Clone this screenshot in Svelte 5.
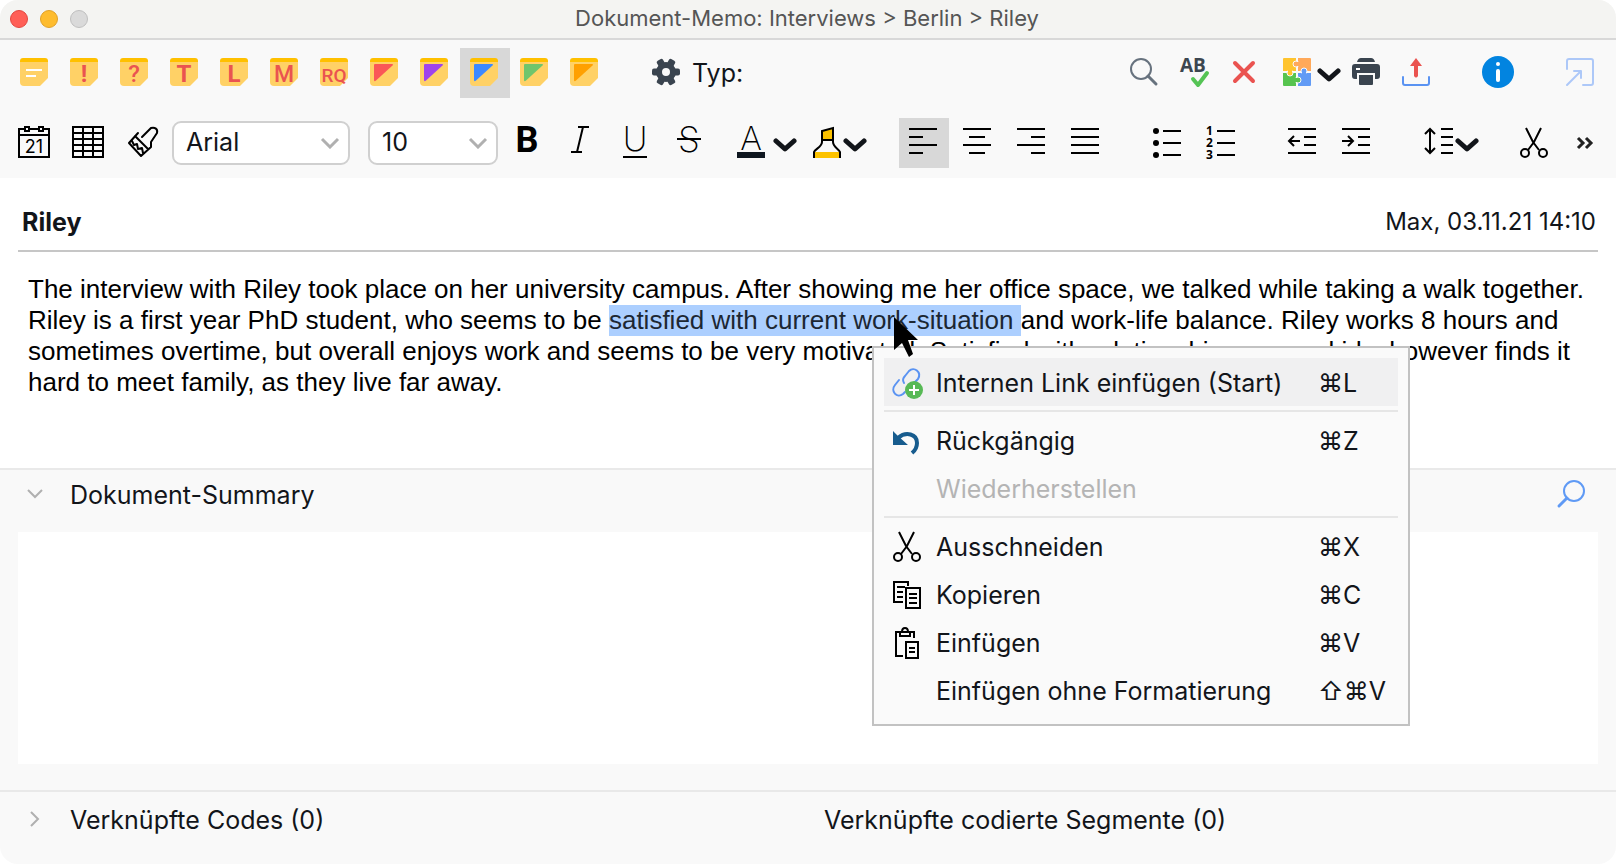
<script>
	const note = '<path d="M1 5h28v16l-8 8H5a4 4 0 0 1-4-4z" fill="#ffd166"/><path d="M1 5V4a3 3 0 0 1 3-3h22a3 3 0 0 1 3 3v1z" fill="#ffc000"/>';
	const letter = (t, size = 24, weight = 700) =>
		`${note}<text x="15" y="25" text-anchor="middle" font-family="Roboto, sans-serif" font-weight="${weight}" font-size="${size}" fill="#ea5350">${t}</text>`;
	const flag = (color) => `${note}<path d="M5 8q0-1 1-1h17q2 0 .5 1.500L7 23.500q-2 1.500-2-.5z" fill="${color}"/>`;
	const glyph = (t, size, weight, y = 24, family = 'Inter') =>
		`<text x="16" y="${y}" text-anchor="middle" font-family="${family}, sans-serif" font-weight="${weight}" font-size="${size}">${t}</text>`;
	const line = (d, w = 2, color = '#000') => `<path d="${d}" fill="none" stroke="${color}" stroke-width="${w}"/>`;
	const round = (d, w = 2, color = '#000') =>
		`<path d="${d}" fill="none" stroke="${color}" stroke-width="${w}" stroke-linecap="round" stroke-linejoin="round"/>`;

	const icons = {
		calendar:
			line('M1 2h30v28H1zM1 8h30') +
			'<path d="M7 0h4v4H7zM21 0h4v4h-4z" fill="#f9f9f9" stroke="#000" stroke-width="2"/>' +
			glyph('21', 18, 400, 26),
		table: line('M1 0h30v30H1zM11 0v30M21 0v30M1 6h30M1 12h30M1 18h30M1 24h30'),
		brush: round('M12 6L3 16l12 13 10-9V15l6-9c1-4-2-6-6-5l-7 7-2 2M9 9l13 13M6 14l2 4 3-1 1 5 4-1 1 5'),
		bold: glyph('B', 36, 700, 25, 'Roboto'),
		italic: line('M13 0h11M6 25h11M18 0l-6 25'),
		underline: glyph('U', 34, 200, 24) + line('M4 30h24'),
		strike: glyph('S', 35, 200, 25) + line('M4 12h24'),
		color: glyph('A', 33, 200, 23) + '<path d="M2 25h28v6H2z" fill="#0f1720"/>',
		marker:
			'<path d="M11 4l11-3v12H11zM3 25h26v6H3z" fill="#fcc200"/>' +
			line('M3 31v-6c1-3 8-5 8-10V4l11-3v14c0 5 6 7 7 10v6M11 13h11'),
		left: line('M1 2h28M1 10h14M1 18h28M1 26h14'),
		center: line('M1 2h28M7 10h16M1 18h28M7 26h16'),
		right: line('M1 2h28M15 10h14M1 18h28M15 26h14'),
		justify: line('M1 2h28M1 10h28M1 18h28M1 26h28'),
		bullets:
			'<circle cx="5" cy="4" r="3"/><circle cx="5" cy="16" r="3"/><circle cx="5" cy="28" r="3"/>' +
			line('M12 4h18M12 16h18M12 28h18'),
		numbers:
			'<g font-family="Open Sans, sans-serif" font-weight="700" font-size="12"><text x="1" y="8">1</text><text x="1" y="20">2</text><text x="1" y="32">3</text></g>' +
			line('M12 4h18M12 16h18M12 28h18'),
		outdent: line('M2 2h28M18 10h12M18 18h12M2 26h28M14 14H4M8 9l-5 5 5 5'),
		indent: line('M2 2h28M18 10h12M18 18h12M2 26h28M2 14h10M8 9l5 5-5 5'),
		spacing: line('M7 2v24M2 7l5-5 5 5M2 21l5 5 5-5M18 2h12M18 10h12M18 18h12M18 26h12'),
		scissors:
			line('M8 1l7 14 6 8M23 1l-7 14-6 8') +
			'<g fill="none" stroke="#000" stroke-width="2"><circle cx="7" cy="26" r="4"/><circle cx="25" cy="26" r="4"/></g>',
		more: line('M8 11l5 5-5 5M16 11l5 5-5 5', 3, '#222'),
		gear:
			'<g fill="#3a444f">' +
			[0, 60, 120, 180, 240, 300].map((a) => `<rect x="22" y="11.500" width="8" height="7" rx="2" transform="rotate(${a} 16 15)"/>`).join('') +
			'</g><circle cx="16" cy="15" r="7" fill="none" stroke="#3a444f" stroke-width="6"/>',
		search: '<circle cx="13" cy="12" r="10" fill="none" stroke="#67727e" stroke-width="2"/>' + round('M20 19l8 8', 3, '#67727e'),
		spell:
			'<text x="2" y="15" font-family="Open Sans, sans-serif" font-weight="700" font-size="19" fill="#3c4650">AB</text>' +
			round('M15 22l5 6 9-12', 4, '#55c455'),
		remove: round('M7 6l18 18M25 6L7 24', 4, '#ea5350'),
		puzzle:
			'<path d="M2 2q0-1 1-1h13v14H2z" fill="#ffc42e"/><path d="M16 1h13q1 0 1 1v13H16z" fill="#ffa95a"/>' +
			'<path d="M2 15h14v14H3q-1 0-1-1z" fill="#57c44f"/><path d="M16 15h14v13q0 1-1 1H16z" fill="#629bf5"/>' +
			line('M16 1v14M2 15h28M16 15v14', 2, '#f9f9f9') +
			'<g stroke="#f9f9f9" stroke-width="1"><circle cx="15" cy="7" r="3" fill="#ffa95a"/><circle cx="9" cy="16" r="3" fill="#ffc42e"/><circle cx="17" cy="23" r="3" fill="#57c44f"/><circle cx="23" cy="14" r="3" fill="#629bf5"/></g>' +
			'<path d="M15 5h4v4h-4z" fill="#ffa95a"/><path d="M7 12h4v4H7z" fill="#ffc42e"/><path d="M13 21h4v4h-4z" fill="#57c44f"/><path d="M21 14h4v4h-4z" fill="#629bf5"/>',
		print:
			'<path d="M7 5q1-4 4-4h10q3 0 4 4zM5 7h22q3 0 3 3v9q0 3-3 3H5q-3 0-3-3v-9q0-3 3-3z" fill="#3a444f"/>' +
			'<path d="M8 17h16v10q0 2-2 2H10q-2 0-2-2z" fill="#3a444f" stroke="#f9f9f9" stroke-width="2"/>' +
			line('M6 12h4', 2, '#fff'),
		upload: '<path d="M16 1l6 8h-4v10q-2 3-4 0V9h-4z" fill="#ea5350"/>' + round('M3 20v6q0 2 2 2h22q2 0 2-2v-6', 2, '#5a93f2'),
		info: '<circle cx="16" cy="15" r="16" fill="#0284e0"/><circle cx="16" cy="7" r="2" fill="#fff"/><rect x="14" y="12" width="4" height="13" rx="2" fill="#fff"/>',
		popout: round('M3 12V4q0-2 2-2h22q2 0 2 2v22q0 2-2 2h-8M3 28l14-14M10 14h7v7', 2, '#adc8f8'),
		link:
			round('M13 16c-2-3-1-5 1-7l4-5c5-5 13 1 9 8l-3 3M8 13l-4 5c-5 6 2 14 8 9l2-2', 2, '#5a93f2') +
			'<circle cx="23" cy="23" r="9" fill="#57b955"/>' +
			line('M23 18v10M18 23h10', 2, '#fff'),
		undo: '<path d="M2 6l5 5 10 9H2z" fill="#175c8e"/>' + line('M7 13c8-7 19-4 19 5q0 6-5 10', 4, '#175c8e'),
		copy: line('M12 23H3V3h14v4M15 9h14v20H15zM18 15h8M18 19h8M18 24h8M6 8h8M6 13h6M6 18h6'),
		paste: line('M12 29H5V5h4M19 5h4v6M9 5h10v4H9zM15 15h12v16H15zM18 21h6M18 25h6M11 5q0-4 3-4t3 4'),
		find: '<circle cx="18" cy="12" r="10" fill="none" stroke="#5f9af5" stroke-width="2"/>' + round('M11 19l-8 8', 3, '#5f9af5')
	};

	const memoTypes = [
		['Memo', note + line('M7 13h16M7 19h10', 2, '#fff')],
		['Wichtig', letter('!')],
		['Frage', letter('?', 24, 500)],
		['Theorie', letter('T')],
		['Sprache', letter('L')],
		['Methode', letter('M', 23, 500)],
		['Forschungsfrage', letter('RQ', 19, 500)],
		['Rot', flag('#fa5757')],
		['Violett', flag('#9f43ec')],
		['Blau', flag('#3c89ff')],
		['Grün', flag('#6fc56c')],
		['Orange', flag('#ffa000')]
	];
	const styles = [
		['Fett', 'bold'],
		['Kursiv', 'italic'],
		['Unterstrichen', 'underline'],
		['Durchgestrichen', 'strike']
	];
	const aligns = [
		['Linksbündig', 'left'],
		['Zentriert', 'center'],
		['Rechtsbündig', 'right'],
		['Blocksatz', 'justify']
	];
	const menu = [
		[{ icon: 'link', label: 'Internen Link einfügen (Start)', keys: '⌘L' }],
		[
			{ icon: 'undo', label: 'Rückgängig', keys: '⌘Z' },
			{ label: 'Wiederherstellen', disabled: true }
		],
		[
			{ icon: 'scissors', label: 'Ausschneiden', keys: '⌘X' },
			{ icon: 'copy', label: 'Kopieren', keys: '⌘C' },
			{ icon: 'paste', label: 'Einfügen', keys: '⌘V' },
			{ label: 'Einfügen ohne Formatierung', keys: '⇧⌘V' }
		]
	];

	let memoType = $state('Blau');
	let align = $state('left');
</script>

{#snippet svg(markup)}
	<svg class="icon" viewBox="0 0 32 32" aria-hidden="true">{@html markup}</svg>
{/snippet}

{#snippet tool(label, name)}
	<button class="tool" aria-label={label}>{@render svg(icons[name])}</button>
{/snippet}

{#snippet drop(label, name)}
	<button class="drop" aria-label={label}>
		{@render svg(icons[name])}
		<svg class="arrow" viewBox="0 0 24 32" aria-hidden="true"><path d="M3 14l9 8 9-8" /></svg>
	</button>
{/snippet}

<div class="window">
	<header class="titlebar">
		<div class="lights">
			<button class="light red" aria-label="Schließen"></button>
			<button class="light yellow" aria-label="Minimieren"></button>
			<button class="light gray" aria-label="Zoomen"></button>
		</div>
		<h1>Dokument-Memo: Interviews &gt; Berlin &gt; Riley</h1>
	</header>

	<div class="toolbars">
		<div class="row">
			{#each memoTypes as [label, markup]}
				<button class="tool" class:on={memoType === label} aria-label={label} onclick={() => (memoType = label)}>
					{@render svg(markup)}
				</button>
			{/each}
			<div class="type">
				{@render tool('Einstellungen', 'gear')}
				<span>Typ:</span>
			</div>
			<div class="actions">
				{@render tool('Suchen', 'search')}
				{@render tool('Rechtschreibung', 'spell')}
				{@render tool('Löschen', 'remove')}
				{@render drop('Codes', 'puzzle')}
				{@render tool('Drucken', 'print')}
				{@render tool('Exportieren', 'upload')}
				<div class="apart">{@render tool('Info', 'info')}</div>
				<div class="apart">{@render tool('Abdocken', 'popout')}</div>
			</div>
		</div>

		<div class="row format">
			{@render tool('Datum', 'calendar')}
			{@render tool('Tabelle', 'table')}
			{@render tool('Format übertragen', 'brush')}
			<div class="select family">
				<select aria-label="Schriftart"><option>Arial</option></select>
				<svg viewBox="0 0 20 12" aria-hidden="true"><path d="M2 2l8 8 8-8" /></svg>
			</div>
			<div class="select size">
				<select aria-label="Schriftgröße"><option>10</option></select>
				<svg viewBox="0 0 20 12" aria-hidden="true"><path d="M2 2l8 8 8-8" /></svg>
			</div>
			{#each styles as [label, name]}
				{@render tool(label, name)}
			{/each}
			<div class="colors">
				{@render drop('Textfarbe', 'color')}
				{@render drop('Hervorheben', 'marker')}
			</div>
			<div class="group">
				{#each aligns as [label, name]}
					<button class="tool" class:on={align === name} aria-label={label} onclick={() => (align = name)}>
						{@render svg(icons[name])}
					</button>
				{/each}
			</div>
			<div class="group">
				{@render tool('Aufzählung', 'bullets')}
				{@render tool('Nummerierung', 'numbers')}
			</div>
			<div class="group">
				{@render tool('Einzug verkleinern', 'outdent')}
				{@render tool('Einzug vergrößern', 'indent')}
			</div>
			<div class="spacing">{@render drop('Zeilenabstand', 'spacing')}</div>
			<div class="end">
				{@render tool('Ausschneiden', 'scissors')}
				{@render tool('Mehr', 'more')}
			</div>
		</div>
	</div>

	<main>
		<div class="memo-head">
			<h2>Riley</h2>
			<span>Max, 03.11.21 14:10</span>
		</div>
		<div class="memo" contenteditable="true" role="textbox" tabindex="0" aria-label="Memo" spellcheck="false">
			The interview with Riley took place on her university campus. After showing me her office space, we talked while taking a walk together. Riley is a first year PhD student, who seems to be <mark>satisfied with current work-situation{' '}</mark>and work-life balance. Riley works 8 hours and sometimes overtime, but overall enjoys work and seems to be very motivated. Satisfied with relationship, no own kids, however finds it hard to meet family, as they live far away.
		</div>

		<div class="menu" role="menu">
			{#each menu as group, i}
				{#if i > 0}<hr />{/if}
				{#each group as item}
					<button class="item" class:active={item.icon === 'link'} role="menuitem" disabled={item.disabled}>
						{@render svg(item.icon ? icons[item.icon] : '')}
						<span class="label">{item.label}</span>
						<kbd>{item.keys ?? ''}</kbd>
					</button>
				{/each}
			{/each}
		</div>
		<svg class="cursor" viewBox="0 0 26 42" aria-hidden="true"><path d="M1 0l24 23H15l5 14-4 3-7-14-8 7z" /></svg>
	</main>

	<section class="summary">
		<div class="bar">
			<div class="heading">
				<button class="toggle" aria-expanded="true" aria-label="Dokument-Summary einklappen">
					<svg viewBox="0 0 18 18" aria-hidden="true"><path d="M2 4l7 7 7-7" /></svg>
				</button>
				<label for="summary">Dokument-Summary</label>
			</div>
			<button class="find" aria-label="Summary suchen">{@render svg(icons.find)}</button>
		</div>
		<textarea id="summary"></textarea>
	</section>

	<footer>
		<div class="heading">
			<button class="toggle" aria-expanded="false" aria-label="Verknüpfte Codes ausklappen">
				<svg viewBox="0 0 18 18" aria-hidden="true"><path d="M5 1l7 7-7 7" /></svg>
			</button>
			<span>Verknüpfte Codes (0)</span>
		</div>
		<span>Verknüpfte codierte Segmente (0)</span>
	</footer>
</div>

<style>
	:global(body) {
		background: #fff;
	}
	.window {
		min-height: 100vh;
		display: flex;
		flex-direction: column;
		box-sizing: border-box;
		background: #f9f9f9;
		border-radius: 18px;
		overflow: hidden;
		color: #12151a;
		font-family: Inter, sans-serif;
		font-size: 25px;
		line-height: 32px;
	}
	button {
		display: flex;
		align-items: center;
		padding: 0;
		border: none;
		background: none;
		color: inherit;
		font: inherit;
	}
	h1,
	h2 {
		margin: 0;
	}
	.icon {
		display: block;
		flex: none;
		width: 32px;
		height: 32px;
		overflow: visible;
	}

	.titlebar {
		display: grid;
		grid-template-columns: 1fr auto 1fr;
		align-items: center;
		height: 38px;
		padding: 0 12px 0 10px;
		background: #f4f4f2;
		border-bottom: 2px solid #d8d8d8;
	}
	.titlebar h1 {
		color: #555;
		font-size: 22px;
		font-weight: 400;
		line-height: 36px;
		padding-bottom: 2px;
	}
	.lights {
		display: flex;
		gap: 12px;
	}
	.light {
		box-sizing: border-box;
		width: 18px;
		height: 18px;
		border-radius: 50%;
	}
	.red {
		background: #ff5f57;
		border: 1px solid #e2463f;
	}
	.yellow {
		background: #febc2e;
		border: 1px solid #e0a028;
	}
	.gray {
		background: #dadada;
		border: 1px solid #bfbfbf;
	}

	.toolbars {
		display: flex;
		flex-direction: column;
		gap: 20px;
		padding: 8px 11px 10px 10px;
	}
	.row,
	.group,
	.actions,
	.colors,
	.end,
	.type {
		display: flex;
		align-items: center;
	}
	.tool {
		flex: none;
		justify-content: center;
		width: 50px;
		height: 50px;
	}
	.on {
		background: #d8d8d8;
	}
	.drop {
		flex: none;
		height: 50px;
	}
	.arrow {
		width: 24px;
		height: 32px;
		fill: none;
		stroke: #12151a;
		stroke-width: 5;
		stroke-linecap: round;
		stroke-linejoin: round;
	}
	.type {
		margin-left: 31px;
		gap: 1px;
	}
	.actions {
		margin-left: auto;
	}
	.actions .drop {
		margin-left: 12px;
		gap: 4px;
	}
	.apart {
		margin-left: 32px;
	}
	.format,
	.group {
		gap: 4px;
	}
	.format {
		margin: 0 -6px 0 -1px;
	}
	.colors {
		gap: 14px;
		margin: 0 28px 0 17px;
	}
	.colors .drop:first-child {
		gap: 6px;
	}
	.group + .group {
		margin-left: 27px;
	}
	.spacing {
		margin-left: 38px;
	}
	.end {
		margin-left: auto;
		gap: 2px;
	}

	.select {
		position: relative;
		flex: none;
	}
	.family {
		width: 178px;
		margin-left: 1px;
	}
	.size {
		width: 130px;
		margin-left: 14px;
	}
	select {
		display: block;
		appearance: none;
		width: 100%;
		height: 44px;
		padding: 0 12px 2px;
		border: 2px solid #d0d0d0;
		border-radius: 9px;
		background: #fff;
		color: inherit;
		font: inherit;
	}
	.select svg {
		position: absolute;
		right: 10px;
		top: 16px;
		width: 20px;
		height: 12px;
		fill: none;
		stroke: #b0b0b0;
		stroke-width: 3;
		pointer-events: none;
	}

	main {
		position: relative;
		flex: none;
		min-height: 290px;
		padding: 0 18px;
		background: #fff;
	}
	.memo-head {
		display: flex;
		align-items: center;
		justify-content: space-between;
		height: 74px;
		padding: 16px 2px 0 4px;
		box-sizing: border-box;
		border-bottom: 2px solid #c6c6c6;
	}
	.memo-head h2 {
		font-size: 25px;
		font-weight: 700;
	}
	.memo-head span {
		font-size: 24px;
	}
	.memo {
		padding: 22px 0 0 10px;
		color: #000;
		font-family: 'Liberation Sans', Arial, sans-serif;
		font-size: 26px;
		line-height: 31px;
		outline: none;
	}
	mark {
		padding-bottom: 1px;
		background: #accfff;
		color: #1c2733;
	}

	.menu {
		position: absolute;
		z-index: 1;
		left: 872px;
		top: 168px;
		box-sizing: border-box;
		width: 538px;
		padding: 10px;
		background: #fafafa;
		border: 2px solid #c2c2c2;
	}
	.item {
		width: 100%;
		height: 48px;
		padding: 2px 0 0 7px;
	}
	.active {
		background: #f0f0f1;
	}
	.item:disabled {
		color: #b4b4b4;
	}
	.label {
		width: 382px;
		margin-left: 13px;
		text-align: left;
		white-space: nowrap;
	}
	kbd {
		font: inherit;
		white-space: nowrap;
	}
	hr {
		height: 2px;
		margin: 4px 0;
		border: none;
		background: #e6e6e6;
	}
	.cursor {
		position: absolute;
		z-index: 2;
		left: 893px;
		top: 139px;
		width: 26px;
		height: 42px;
	}

	.summary {
		flex: 1;
		display: flex;
		flex-direction: column;
		padding: 0 18px 26px;
		border-top: 2px solid #e9e9e9;
	}
	.bar {
		display: flex;
		justify-content: space-between;
		height: 62px;
		padding: 9px 10px 0 8px;
		box-sizing: border-box;
	}
	.heading {
		display: flex;
		align-items: center;
		gap: 26px;
		height: 32px;
	}
	.toggle svg {
		width: 18px;
		height: 18px;
		fill: none;
		stroke: #b0b0b0;
		stroke-width: 2;
	}
	.find {
		height: 32px;
	}
	textarea {
		flex: 1;
		box-sizing: border-box;
		width: 100%;
		padding: 8px;
		border: none;
		background: #fff;
		font: inherit;
		resize: none;
		outline: none;
	}

	footer {
		display: grid;
		grid-template-columns: 1fr 1fr;
		column-gap: 6px;
		padding: 12px 0 28px 26px;
		border-top: 2px solid #e9e9e9;
	}
</style>
